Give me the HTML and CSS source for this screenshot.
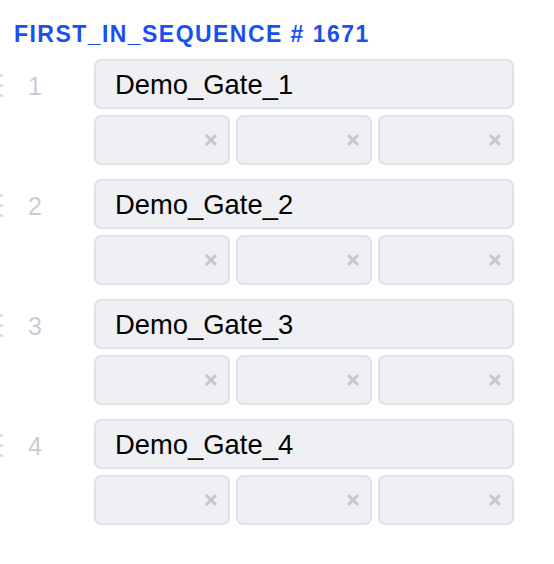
FILE: index.html
```html
<!DOCTYPE html>
<html>
<head>
<meta charset="utf-8">
<link rel="stylesheet" href="styles.css">
</head>
<body>
<div class="panel">
  <h1 class="title">FIRST_IN_SEQUENCE # 1671</h1>
  <div class="list">
    <div class="item">
      <div class="lead"><span class="grip"><i></i><i></i><i></i></span><span class="num">1</span></div>
      <div class="fields">
        <div class="name">Demo_Gate_1</div>
        <div class="subs">
          <div class="sub"><svg class="x" viewBox="0 0 14 14"><path d="M2 2L12 12M12 2L2 12"/></svg></div>
          <div class="sub"><svg class="x" viewBox="0 0 14 14"><path d="M2 2L12 12M12 2L2 12"/></svg></div>
          <div class="sub"><svg class="x" viewBox="0 0 14 14"><path d="M2 2L12 12M12 2L2 12"/></svg></div>
        </div>
      </div>
    </div>
    <div class="item">
      <div class="lead"><span class="grip"><i></i><i></i><i></i></span><span class="num">2</span></div>
      <div class="fields">
        <div class="name">Demo_Gate_2</div>
        <div class="subs">
          <div class="sub"><svg class="x" viewBox="0 0 14 14"><path d="M2 2L12 12M12 2L2 12"/></svg></div>
          <div class="sub"><svg class="x" viewBox="0 0 14 14"><path d="M2 2L12 12M12 2L2 12"/></svg></div>
          <div class="sub"><svg class="x" viewBox="0 0 14 14"><path d="M2 2L12 12M12 2L2 12"/></svg></div>
        </div>
      </div>
    </div>
    <div class="item">
      <div class="lead"><span class="grip"><i></i><i></i><i></i></span><span class="num">3</span></div>
      <div class="fields">
        <div class="name">Demo_Gate_3</div>
        <div class="subs">
          <div class="sub"><svg class="x" viewBox="0 0 14 14"><path d="M2 2L12 12M12 2L2 12"/></svg></div>
          <div class="sub"><svg class="x" viewBox="0 0 14 14"><path d="M2 2L12 12M12 2L2 12"/></svg></div>
          <div class="sub"><svg class="x" viewBox="0 0 14 14"><path d="M2 2L12 12M12 2L2 12"/></svg></div>
        </div>
      </div>
    </div>
    <div class="item">
      <div class="lead"><span class="grip"><i></i><i></i><i></i></span><span class="num">4</span></div>
      <div class="fields">
        <div class="name">Demo_Gate_4</div>
        <div class="subs">
          <div class="sub"><svg class="x" viewBox="0 0 14 14"><path d="M2 2L12 12M12 2L2 12"/></svg></div>
          <div class="sub"><svg class="x" viewBox="0 0 14 14"><path d="M2 2L12 12M12 2L2 12"/></svg></div>
          <div class="sub"><svg class="x" viewBox="0 0 14 14"><path d="M2 2L12 12M12 2L2 12"/></svg></div>
        </div>
      </div>
    </div>
  </div>
</div>
</body>
</html>
```
FILE: styles.css
```css
html, body {
  margin: 0;
  padding: 0;
  background: #ffffff;
  font-family: "Liberation Sans", Arial, sans-serif;
}
.panel {
  padding: 20px 0 0 0;
}
.title {
  margin: 0 0 0 14px;
  font-size: 23px;
  line-height: 28px;
  font-weight: bold;
  letter-spacing: 1.45px;
  color: #1a4ff0;
}
.list {
  margin-top: 11px;
  display: flex;
  flex-direction: column;
  gap: 14px;
}
.item {
  display: flex;
}
.lead {
  width: 94px;
  height: 50px;
  display: flex;
  align-items: center;
}
.grip {
  width: 3px;
  display: flex;
  flex-direction: column;
  gap: 7px;
  margin-top: 2px;
}
.grip i {
  display: block;
  width: 3px;
  height: 3px;
  background: #dde0e5;
}
.num {
  margin-left: 25px;
  margin-top: 5px;
  font-size: 25px;
  color: #c9cdd3;
}
.fields {
  width: 420px;
  display: flex;
  flex-direction: column;
  gap: 6px;
}
.name, .sub {
  box-sizing: border-box;
  height: 50px;
  background: #eef0f4;
  border: 2px solid #dde2ea;
  border-radius: 7px;
}
.name {
  display: flex;
  align-items: center;
  padding-left: 19px;
  padding-top: 2px;
  font-size: 27.4px;
  color: #000;
}
.subs {
  display: grid;
  grid-template-columns: 1fr 1fr 1fr;
  gap: 6px;
}
.sub {
  display: flex;
  align-items: center;
  justify-content: flex-end;
  padding-right: 10px;
}
.x {
  width: 14px;
  height: 14px;
  fill: none;
  stroke: #c6c6c6;
  stroke-width: 3;
}
```
